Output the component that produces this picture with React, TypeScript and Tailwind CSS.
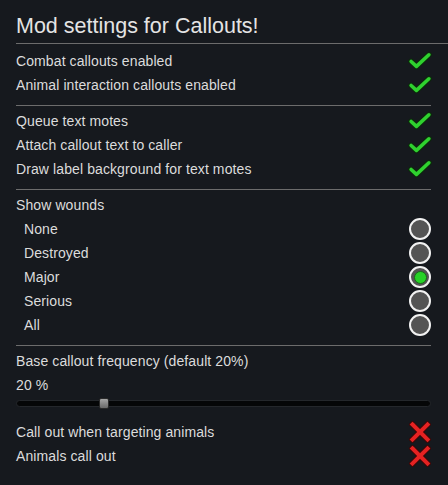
import React from "react";

const Check = () => (
  <svg width="27" height="20" viewBox="0 0 27 20">
    <polyline points="3.5,10.5 9.5,16 23.5,3" fill="none" stroke="#0c2a0c" strokeWidth="6.5" strokeLinecap="round" strokeLinejoin="round" />
    <polyline points="3.5,10.5 9.5,16 23.5,3" fill="none" stroke="#2fd12f" strokeWidth="4" strokeLinecap="round" strokeLinejoin="round" />
  </svg>
);

const Cross = () => (
  <svg width="22" height="22" viewBox="0 0 22 22">
    <g fill="none" strokeLinecap="square">
      <line x1="3.5" y1="3.5" x2="18.5" y2="18.5" stroke="#3a0808" strokeWidth="6" />
      <line x1="18.5" y1="3.5" x2="3.5" y2="18.5" stroke="#3a0808" strokeWidth="6" />
      <line x1="3.5" y1="3.5" x2="18.5" y2="18.5" stroke="#e52222" strokeWidth="4" />
      <line x1="18.5" y1="3.5" x2="3.5" y2="18.5" stroke="#e52222" strokeWidth="4" />
    </g>
  </svg>
);

const Radio = ({ on }: { on?: boolean }) => (
  <div className="w-[22px] h-[22px] rounded-full border-2 border-[#f2f2f2] bg-[#545454] flex items-center justify-center">
    {on && <div className="w-[13px] h-[13px] rounded-full bg-[#27d227] border border-[#1a6a1a]" />}
  </div>
);

const Row = ({ label, icon, indent }: { label: string; icon?: React.ReactNode; indent?: boolean }) => (
  <div className="h-[24px] flex items-center justify-between">
    <span className={indent ? "pl-2 tracking-[0.1px]" : "tracking-[0.1px]"}>{label}</span>
    {icon && <div className="w-[24px] flex items-center justify-center">{icon}</div>}
  </div>
);

export default function App() {
  return (
    <div
      className="w-[448px] h-[485px] bg-[#16191e] text-[#dcdcdc] text-[14px] overflow-hidden pt-3 pl-4"
      style={{ fontFamily: '"Liberation Sans", Arial, sans-serif' }}
    >
      <div className="h-[28px] leading-[29px] text-[21.5px] text-[#e4e4e4]">Mod settings for Callouts!</div>
      <div className="h-px bg-[#6c6c6c] mt-[3px]" />
      <div className="pr-4">
        <div className="mt-[5px]">
          <Row label="Combat callouts enabled" icon={<Check />} />
          <Row label="Animal interaction callouts enabled" icon={<Check />} />
        </div>
        <div className="mt-[8px] h-px bg-[#6c6c6c] mr-[1px]" />
        <div className="mt-[3px]">
          <Row label="Queue text motes" icon={<Check />} />
          <Row label="Attach callout text to caller" icon={<Check />} />
          <Row label="Draw label background for text motes" icon={<Check />} />
        </div>
        <div className="mt-[8px] h-px bg-[#6c6c6c] mr-[1px]" />
        <div className="mt-[3px]">
          <Row label="Show wounds" />
          <Row label="None" indent icon={<Radio />} />
          <Row label="Destroyed" indent icon={<Radio />} />
          <Row label="Major" indent icon={<Radio on />} />
          <Row label="Serious" indent icon={<Radio />} />
          <Row label="All" indent icon={<Radio />} />
        </div>
        <div className="mt-[8px] h-px bg-[#6c6c6c] mr-[1px]" />
        <div className="mt-[3px]">
          <Row label="Base callout frequency (default 20%)" />
          <Row label="20 %" />
          <div className="mt-[3px] h-[7px] rounded-full bg-[#050607] border border-[#24272b] relative mr-[1px]">
            <div className="absolute left-[82px] top-[-3px] w-[10px] h-[11px] rounded-[2px] border border-[#2a2a2a] bg-gradient-to-b from-[#a6a6a6] to-[#6a6a6a]" />
          </div>
          <div className="mt-[13px]">
            <Row label="Call out when targeting animals" icon={<Cross />} />
            <Row label="Animals call out" icon={<Cross />} />
          </div>
        </div>
      </div>
    </div>
  );
}
